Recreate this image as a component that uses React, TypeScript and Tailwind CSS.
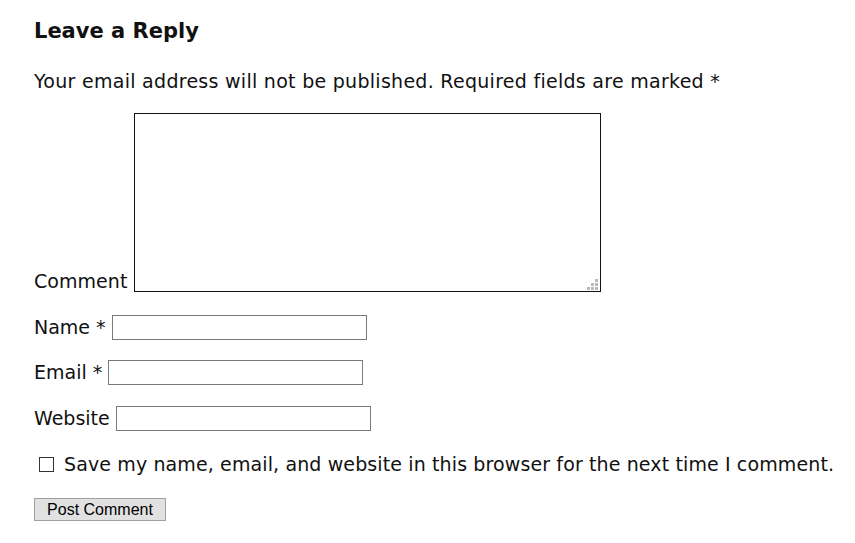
export default function App() {
  const field = 'h-[25px] w-[255px] border border-[#7a7a7a] align-baseline';
  return (
    <div className="min-h-[543px] bg-white px-[34px] pt-[14px] text-[#111] [font-family:'DejaVu_Sans',sans-serif]">
      <h3 className="text-[21px] font-bold leading-[34px]">Leave a Reply</h3>
      <p className="mt-[19px] text-[19px] leading-[28px] tracking-[0.28px]">
        Your email address will not be published. Required fields are marked *
      </p>
      <p className="mt-[18px] text-[19px] leading-[28px] tracking-[0.05px]">
        <label htmlFor="comment">Comment</label>{' '}
        <span className="relative inline-block align-[-4px]">
          <textarea
            id="comment"
            className="block h-[179px] w-[467px] resize-none border border-[#111]"
          />
          <svg className="absolute bottom-[2px] right-[3px]" width="11" height="11" viewBox="0 0 11 11">
            <g fill="#b9b9b9">
              <rect x="8" y="0" width="3" height="3" />
              <rect x="4" y="4" width="3" height="3" />
              <rect x="8" y="4" width="3" height="3" />
              <rect x="0" y="8" width="3" height="3" />
              <rect x="4" y="8" width="3" height="3" />
              <rect x="8" y="8" width="3" height="3" />
            </g>
          </svg>
        </span>
      </p>
      <p className="mt-[18px] text-[19px] leading-[28px]">
        Name * <input className={field} />
      </p>
      <p className="mt-[17px] text-[19px] leading-[28px]">
        Email * <input className={field} />
      </p>
      <p className="mt-[18px] text-[19px] leading-[28px]">
        Website <input className={field} />
      </p>
      <p className="mt-[18px] flex items-center whitespace-nowrap text-[19px] leading-[28px] tracking-[0.12px]">
        <span className="ml-[5px] mr-[10px] inline-block h-[15px] w-[15px] shrink-0 border border-[#333]" />
        Save my name, email, and website in this browser for the next time I comment.
      </p>
      <button className="mt-[20px] h-[23px] w-[132px] border border-[#a0a0a0] bg-[#e1e1e1] text-[16px] leading-[21px] text-black [font-family:'Liberation_Sans',sans-serif]">
        Post Comment
      </button>
    </div>
  );
}
